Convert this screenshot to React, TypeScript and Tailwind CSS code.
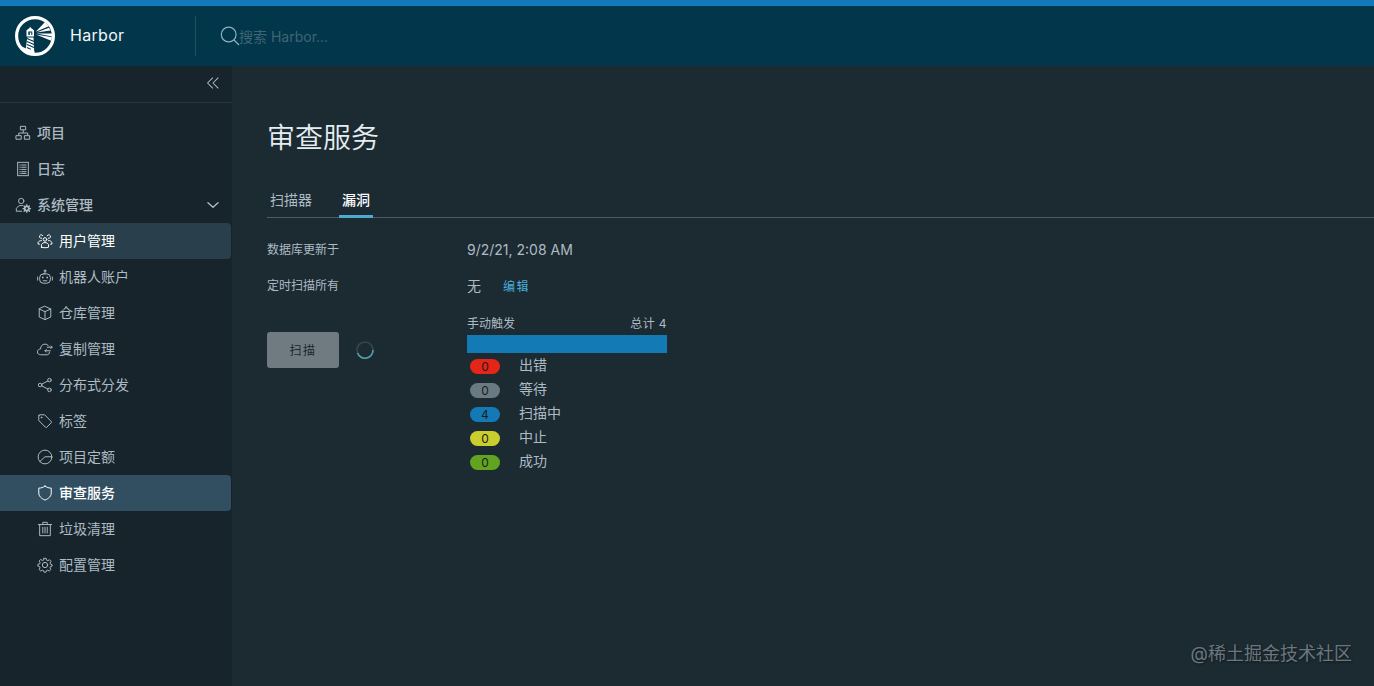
import type { ReactNode } from "react";
import clsx from "clsx";

interface NavItem {
  label: string;
  icon: ReactNode;
  state?: "hover" | "active";
}

interface IconProps {
  children: ReactNode;
  className?: string;
}

// All sidebar icons share the same 36 unit grid
function Icon({ children, className = "size-4" }: IconProps) {
  return (
    <svg
      viewBox="0 0 36 36"
      fill="none"
      stroke="currentColor"
      strokeWidth="2.200"
      strokeLinejoin="round"
      strokeLinecap="round"
      className={clsx("shrink-0", className)}
    >
      {children}
    </svg>
  );
}

const mainItems: NavItem[] = [
  {
    label: "项目",
    icon: (
      <Icon>
        <rect x="13" y="3" width="11" height="8" />
        <rect x="3" y="24" width="11" height="8" />
        <rect x="22" y="24" width="11" height="8" />
        <path d="M18.500 11v6M8.500 23v-5h20v5" />
      </Icon>
    ),
  },
  {
    label: "日志",
    icon: (
      <Icon>
        <rect x="6" y="3" width="24" height="30" strokeLinejoin="miter" />
        <path d="M11 9h1M15 9h10M11 14h1M15 14h10M11 19h1M15 19h10M11 24h1M15 24h10M11 28h1M15 28h10" />
      </Icon>
    ),
  },
  {
    label: "系统管理",
    icon: (
      <Icon>
        <circle cx="14" cy="9" r="6" />
        <path d="M15 32H3v-6c2-4 6-7 11-7 1.500 0 3 .3 4 .8" />
        <circle cx="26.500" cy="26" r="4.700" strokeWidth="4" />
        <path
          d="M26.500 17.500v3M26.500 31.500v3M18 26h3M32 26h3M20.500 20l2 2M30.500 30l2 2M32.500 20l-2 2M22.500 30l-2 2"
          strokeWidth="3"
        />
      </Icon>
    ),
  },
];

const adminItems: NavItem[] = [
  {
    label: "用户管理",
    state: "hover",
    icon: (
      <Icon>
        <circle cx="18" cy="14.500" r="4" />
        <path d="M10 32v-6c2-3 5-4.500 8-4.500s6 1.500 8 4.500v6c-5 1.500-11 1.500-16 0z" />
        <path d="M10.500 12a4 4 0 1 1 2.500-6M25.500 12a4 4 0 1 0-2.500-6M10 17c-3.500 0-6 1.500-7.500 4v4h3M26 17c3.500 0 6 1.500 7.500 4v4h-3" />
      </Icon>
    ),
  },
  {
    label: "机器人账户",
    icon: (
      <Icon>
        <rect x="6" y="11" width="24" height="21" rx="8" />
        <circle cx="18" cy="4" r="2" />
        <path d="M18 6v5M1.500 18v7M34.500 18v7M14 26.500h8" />
        <path d="M13 18.500v1M23 18.500v1" strokeWidth="3.500" />
      </Icon>
    ),
  },
  {
    label: "仓库管理",
    icon: (
      <Icon>
        <path d="M18 3l13 6v18l-13 6-13-6V9z" />
        <path d="M5 9l13 6 13-6M18 15v18" />
      </Icon>
    ),
  },
  {
    label: "复制管理",
    icon: (
      <Icon>
        <path d="M28 25c0 4-2 6-5 6H8c-4 0-7-2.500-7-6.500S4 18 8 18c0-6 4-11 10-11 3.500 0 6 1.500 8 4" />
        <path d="M23 14h11M31 11l3 3-3 3M30 22H18M21 19l-3 3 3 3" />
      </Icon>
    ),
  },
  {
    label: "分布式分发",
    icon: (
      <Icon>
        <circle cx="7" cy="18" r="4" />
        <circle cx="28" cy="7" r="4" />
        <circle cx="28" cy="29" r="4" />
        <path d="M10.500 16l14-7M10.500 20l14 7" />
      </Icon>
    ),
  },
  {
    label: "标签",
    icon: (
      <Icon>
        <path d="M4 6v11l15 15c1 1 2 1 3 0l10-10c1-1 1-2 0-3L17 4H6c-1 0-2 1-2 2z" />
        <circle cx="10" cy="10" r="1" />
      </Icon>
    ),
  },
  {
    label: "项目定额",
    icon: (
      <Icon>
        <circle cx="18" cy="18" r="15.500" />
        <path d="M6.500 28L18 17.500h15" />
      </Icon>
    ),
  },
  {
    label: "审查服务",
    state: "active",
    icon: (
      <Icon>
        <path d="M18 2.500C14 5.500 9 7 4 7v11c0 7 5 12 14 16 9-4 14-9 14-16V7c-5 0-10-1.500-14-4.500z" />
      </Icon>
    ),
  },
  {
    label: "垃圾清理",
    icon: (
      <Icon>
        <path d="M3 8h30M6 8v25h24V8M13 8V3h10v5M13 14v13M18 14v13M23 14v13" />
      </Icon>
    ),
  },
  {
    label: "配置管理",
    icon: (
      <Icon>
        <circle cx="18" cy="18" r="6" />
        <path d="M15.500 3h5l1 4.200 2.900 1.200 3.700-2.200 3.500 3.500-2.200 3.700 1.200 2.900L34 17.500v3l-3.600 1-1.200 2.900 2 3.700-3.500 3.500-3.500-2-2.900 1.200-1 3.200h-4.600l-1-3.200-2.900-1.200-3.500 2-3.500-3.500 2-3.700-1.200-2.900-3.600-1v-4l3.800-.8 1.200-2.900-2.200-3.700 3.500-3.500 3.700 2.200 2.900-1.200z" />
      </Icon>
    ),
  },
];

const metrics = [
  { label: "出错", count: 0, color: "bg-[#e62519]" },
  { label: "等待", count: 0, color: "bg-[#6a7a82]" },
  { label: "扫描中", count: 4, color: "bg-[#147ab5]" },
  { label: "中止", count: 0, color: "bg-[#cbcd2e]" },
  { label: "成功", count: 0, color: "bg-[#62a420]" },
];

function HarborLogo() {
  return (
    <svg viewBox="0 0 40 40" className="size-10 shrink-0">
      <circle cx="20" cy="20" r="18.400" fill="none" stroke="white" strokeWidth="3.200" />
      {/* roof and lamp room */}
      <path d="M15 10.500l1 1.500 3 2.300v6.200h-7.500v-6.200l3-2.300z" fill="white" />
      <path d="M13.300 15.500h4v3.500h-4z" fill="#02364a" />
      <path d="M14.800 16.500h1.500V19h-1.500z" fill="white" />
      {/* tower */}
      <path d="M12.300 21.500h6.200l.8 15.500-8.800-2z" fill="white" />
      <path
        d="M12 22.500l7 3M12 25.500l7 3M12 28.500l7 3M12 31.500l4 2"
        stroke="#02364a"
        strokeWidth="1.100"
      />
      <path d="M6 30l5 2.500 8 2 1 4-8-2z" fill="white" />
      {/* light beams */}
      <path
        d="M20.800 15.800L30 6l3.800 4.200zM21.500 16.500L34 11.800l1.500 2.800zM21.500 17.500H37v3zM21 18.500l16 2.800-.8 3.400z"
        fill="white"
      />
    </svg>
  );
}

function NavRow({ item, nested }: { item: NavItem; nested?: boolean }) {
  return (
    <a
      className={clsx(
        "flex h-9 w-[231px] items-center gap-1.5 rounded-r-[4px] pb-px text-sm leading-9",
        nested ? "pl-[37px]" : "pl-[15px] font-medium",
        item.state === "hover" && "bg-[#293f4b] text-white",
        item.state === "active" && "bg-[#314f61] font-medium text-white",
      )}
    >
      {item.icon}
      <span>{item.label}</span>
    </a>
  );
}

function Header() {
  return (
    <header className="flex h-[66px] items-center border-t-[6px] border-[#1479b8] bg-[#02364a]">
      <div className="flex h-10 w-[196px] items-center border-r border-[#23505f] pl-[15px]">
        <HarborLogo />
        <span className="ml-[15px] pb-0.5 text-base tracking-[0.3px] text-[#f2f7f9]">Harbor</span>
      </div>
      <label className="flex items-center pl-6 text-[#3f6574]">
        <svg
          viewBox="0 0 20 20"
          fill="none"
          stroke="#8eb0bf"
          strokeWidth="1.200"
          className="size-5 shrink-0"
        >
          <circle cx="8.700" cy="8.500" r="7.400" />
          <path d="M14 14l5 5" />
        </svg>
        <span className="-ml-px pt-0.5 text-sm leading-5">搜索 Harbor...</span>
      </label>
    </header>
  );
}

function Sidebar() {
  return (
    <nav className="w-[232px] shrink-0 bg-[#17242b] text-[#adbbc4]">
      <div className="flex h-[37px] items-center justify-end border-b border-[#26363f] pb-0.5 pr-3">
        <Icon className="size-3.5">
          <path d="M17 5L4 18l13 13M31 5L18 18l13 13" strokeWidth="2.600" />
        </Icon>
      </div>
      <div className="pt-3">
        {mainItems.slice(0, 2).map((item) => (
          <NavRow key={item.label} item={item} />
        ))}
        <div className="flex items-center">
          <NavRow item={mainItems[2]} />
          <Icon className="-ml-[25px] size-3.5">
            <path d="M5 12l13 12 13-12" strokeWidth="3.500" />
          </Icon>
        </div>
        {adminItems.map((item) => (
          <NavRow key={item.label} item={item} nested />
        ))}
      </div>
    </nav>
  );
}

function ScanMetrics() {
  return (
    <div className="w-[200px]">
      <div className="flex h-[18px] items-center justify-between text-xs leading-[18px]">
        <span>手动触发</span>
        <span className="tracking-[0.4px]">总计&nbsp;4</span>
      </div>
      <div className="mt-0.5 h-[18px] bg-[#147ab5]" />
      <ul>
        {metrics.map((metric) => (
          <li key={metric.label} className="flex h-6 items-center">
            <span
              className={clsx(
                "ml-[3px] mt-[3px] h-[15px] w-[30px] rounded-full text-center text-xs leading-[15px] text-[#1b1b1b]",
                metric.color,
              )}
            >
              {metric.count}
            </span>
            <span className="ml-[19px] text-sm leading-6">{metric.label}</span>
          </li>
        ))}
      </ul>
    </div>
  );
}

export default function App() {
  return (
    <div className="relative flex h-[686px] w-[1374px] flex-col overflow-hidden bg-[#1c2a32] font-['Inter','Noto_Sans_CJK_SC',sans-serif] text-[#adbbc4]">
      <Header />
      <div className="flex grow">
        <Sidebar />
        <main className="grow pl-[35px]">
          <h1 className="mt-[51px] text-[28px] font-[350] leading-[42px] text-[#e5edf1]">
            审查服务
          </h1>
          <div className="mt-[23px] flex h-9 border-b border-[#4b5c66] text-sm leading-9">
            <button className="w-[48px]">扫描器</button>
            <button className="ml-6 h-9 w-[34px] border-b-[3px] border-[#52a9d0] font-medium leading-9 text-white">
              漏洞
            </button>
          </div>
          <div className="mt-[14px] flex h-9 items-center leading-9">
            <span className="w-[200px] text-xs">数据库更新于</span>
            <span className="text-sm">9/2/21, 2:08 AM</span>
          </div>
          <div className="flex h-9 items-center leading-9">
            <span className="w-[200px] text-xs">定时扫描所有</span>
            <span className="text-sm">无</span>
            <button className="ml-[22px] pt-0.5 text-xs tracking-[1.500px] text-[#49aeda]">编辑</button>
          </div>
          <div className="mt-[11px] flex">
            <div className="flex w-[200px] items-start pt-[17px]">
              <button className="h-9 w-[72px] rounded-[3px] bg-[#707b81] pt-0.5 text-xs tracking-[1.500px] text-[#1c272d]">
                扫描
              </button>
              <svg viewBox="0 0 18 18" fill="none" strokeWidth="1.600" className="ml-[17px] mt-[9px] size-[18px]">
                <circle cx="9" cy="9" r="8" stroke="#35464f" />
                <path d="M1.500 12a8 8 0 0 0 15.500-3" stroke="#4fa3ad" />
              </svg>
            </div>
            <ScanMetrics />
          </div>
        </main>
      </div>
      <span className="absolute bottom-[18px] right-[22px] text-lg leading-7 text-[#6c777d] [text-shadow:1px_1px_2px_#10191e]">
        @稀土掘金技术社区
      </span>
    </div>
  );
}
